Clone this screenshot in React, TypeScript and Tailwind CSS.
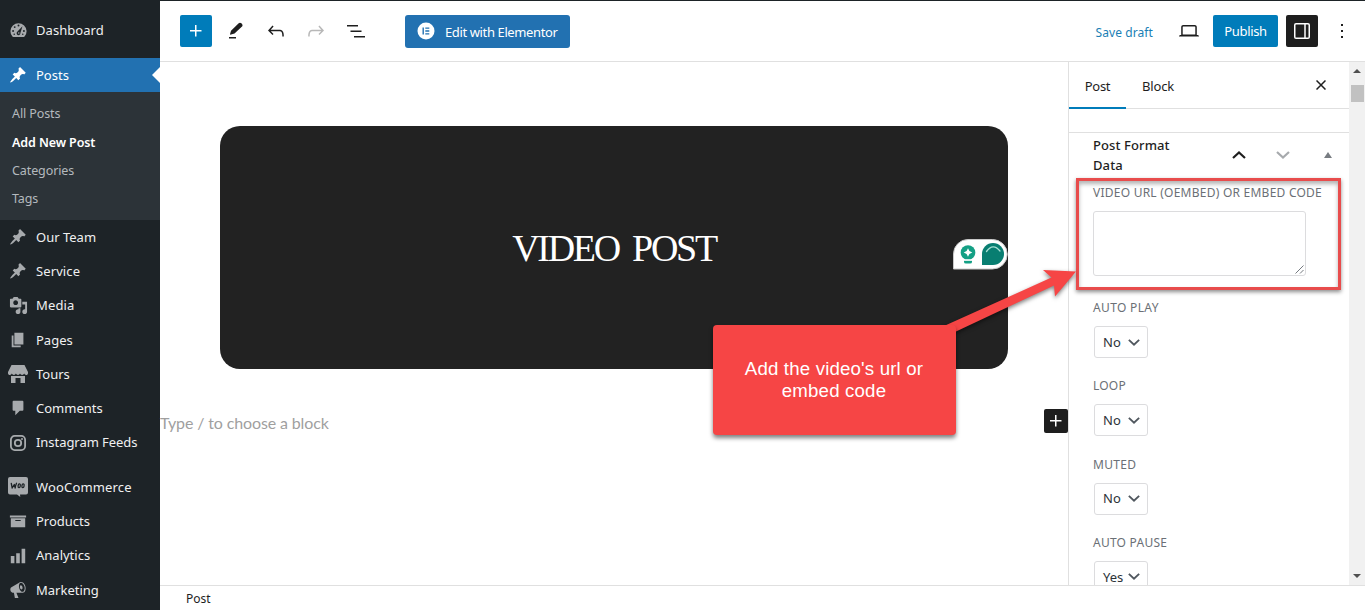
import type { ReactNode } from "react";

const ICONS = {
  pin: "M10.44 3.02l1.82-1.82 6.36 6.35-1.83 1.82c-1.05-.68-2.48-.57-3.41.36l-.75.75c-.92.93-1.04 2.35-.35 3.41l-1.83 1.82-2.41-2.41-2.8 2.79c-.42.42-3.38 2.71-3.8 2.29s1.86-3.39 2.28-3.81l2.79-2.79L4.1 9.36l1.83-1.82c1.05.69 2.48.57 3.4-.36l.75-.75c.93-.92 1.05-2.35.36-3.41z",
  media:
    "M13 11V4c0-.55-.45-1-1-1h-1.67L9 1H5L3.67 3H2c-.55 0-1 .45-1 1v7c0 .55.45 1 1 1h10c.55 0 1-.45 1-1zM7 4.5c1.38 0 2.5 1.12 2.5 2.5S8.38 9.5 7 9.5 4.5 8.38 4.5 7 5.62 4.5 7 4.5zM14 6h5v10.5c0 1.38-1.12 2.5-2.5 2.5S14 17.88 14 16.5s1.12-2.5 2.5-2.5c.17 0 .34.02.5.05V9h-3V6zm-4 8.05V13h2v3.5c0 1.38-1.12 2.5-2.5 2.5S7 17.88 7 16.5 8.12 14 9.5 14c.17 0 .34.02.5.05z",
  page: "M6 15V2h10v13H6zm-1 1h8v2H3V5h2v11z",
  comment: "M5 2h10c.6 0 1 .4 1 1v9c0 .6-.4 1-1 1h-3l-5 5v-5H5c-.6 0-1-.4-1-1V3c0-.6.4-1 1-1z",
  store:
    "M3.500 1h13L20 8v1.200c0 1-.8 1.800-1.800 1.800s-1.700-.7-2-1.400c-.4.8-1.200 1.400-2.100 1.400s-1.700-.6-2.100-1.400c-.4.8-1.100 1.400-2 1.400s-1.700-.6-2.100-1.400c-.4.8-1.100 1.400-2 1.400S4.200 10.400 3.800 9.600C3.500 10.400 2.800 11 1.900 11 .8 11 0 10.200 0 9.200V8zM3 12h14v7h-4.500v-5h-5v5H3z",
  archive: "M19 4v2H1V4h18zM2 7h16v10H2V7zm11 3V9H7v1h6z",
  chart: "M18 18V2h-4v16h4zm-6 0V7H8v11h4zm-6 0v-8H2v8h4z",
  megaphone:
    "M18.15 5.94c.46 1.62.38 3.22-.02 4.48-.42 1.28-1.26 2.18-2.3 2.48-.16.06-.26.06-.4.06-.06.02-.12.02-.18.02-.06.02-.14.02-.22.02h-6.8l2.22 5.5c.02.14-.06.26-.14.34-.08.1-.24.16-.34.16H6.95c-.1 0-.26-.06-.34-.16-.08-.08-.16-.2-.14-.34l-1-5.5H4.25l-.02-.02c-.5.06-1.08-.18-1.54-.62s-.88-1.08-1.06-1.88c-.24-.8-.2-1.56-.02-2.2.18-.62.58-1.08 1.06-1.3l.02-.02 9-5.4c.1-.06.18-.1.24-.16.06-.04.14-.08.24-.12.16-.08.28-.12.5-.18 1.04-.3 2.24.1 3.22.98s1.84 2.24 2.26 3.86zm-2.58 5.98h-.02c.4-.1.74-.34 1.04-.7.58-.7.86-1.76.86-3.04 0-.64-.1-1.3-.28-1.98-.34-1.36-1.02-2.5-1.78-3.24s-1.68-1.1-2.46-.88c-.82.22-1.4.96-1.7 2-.32 1.04-.28 2.36.06 3.72.38 1.36 1 2.5 1.8 3.24.78.74 1.62 1.1 2.48.88zm-2.54-7.08c.22-.04.42-.02.62.04.38.16.76.48 1.02 1s.42 1.2.42 1.78c0 .3-.04.56-.12.8-.18.48-.44.84-.86.94-.34.1-.8-.06-1.14-.4s-.64-.86-.78-1.5c-.18-.62-.12-1.24.02-1.72s.48-.84.82-.94z",
  undo: "M18.3 11.7c-.6-.6-1.4-.9-2.3-.9H6.7l2.9-3.3-1.1-1-4.5 5L8.5 16l1-1-2.7-2.7H16c.5 0 .9.2 1.3.5 1 1 1 3.4 1 4.5v.3h1.5v-.2c0-1.5 0-4.3-1.5-5.7z",
  plus: "M11 12.5V17.5H12.5V12.5H17.5V11H12.5V6H11V11H6V12.5H11Z",
  list: "M3 6h11v1.5H3V6Zm3.5 5.5h11V13h-11v-1.5ZM21 17H10v1.5h11V17Z",
  laptop:
    "M20.5 16h-.7V8c0-1.1-.9-2-2-2H6.2c-1.1 0-2 .9-2 2v8h-.7c-.8 0-1.5.7-1.5 1.5h20c0-.8-.7-1.5-1.5-1.5zM5.7 8c0-.3.2-.5.5-.5h11.6c.3 0 .5.2.5.5v7.6H5.7V8z",
};

function Dash({ d, className = "size-[18px]" }: { d: string; className?: string }) {
  return (
    <svg viewBox="0 0 20 20" className={className} fill="currentColor" fillRule="evenodd">
      <path d={d} />
    </svg>
  );
}

function Glyph({ d, className = "" }: { d: string; className?: string }) {
  return (
    <svg viewBox="0 0 24 24" className={`size-6 shrink-0 ${className}`} fill="currentColor" fillRule="evenodd">
      <path d={d} />
    </svg>
  );
}

function DashboardIcon() {
  return (
    <svg viewBox="0 0 20 20" className="size-[19px]">
      <path fill="currentColor" d="M3.600 16.400A8.500 8.500 0 1 1 16.400 16.400Q16 16.800 15.500 16.800H4.500Q4 16.800 3.600 16.400z" />
      <g fill="#1d2327">
        <circle cx="10" cy="4.700" r="1" />
        <circle cx="6" cy="6.400" r="1" />
        <circle cx="4.300" cy="10.500" r="1" />
        <circle cx="15.700" cy="10.500" r="1" />
        <circle cx="5.500" cy="14" r=".8" />
        <circle cx="14.500" cy="14" r=".8" />
        <path d="M14.200 5.400 12 12.700a2 2 0 1 1-3.300-1.300z" />
      </g>
      <circle cx="10.300" cy="12.700" r=".8" fill="currentColor" />
    </svg>
  );
}

function InstagramIcon() {
  return (
    <svg viewBox="0 0 18 18" className="size-[18px]" fill="none" stroke="currentColor" strokeWidth="1.800">
      <rect x="1.900" y="1.900" width="14.200" height="14.200" rx="3.800" />
      <circle cx="9" cy="9" r="3.200" />
      <circle cx="13" cy="5" r="1" fill="currentColor" stroke="none" />
    </svg>
  );
}

function WooIcon() {
  return (
    <svg viewBox="0 0 20 20" className="size-5" fill="none">
      <path fill="#a7aaad" d="M2 0h16a2 2 0 0 1 2 2v13.500a2 2 0 0 1-2 2h-6l.3 2.500-3.300-2.500H2a2 2 0 0 1-2-2V2A2 2 0 0 1 2 0z" />
      <g stroke="#1d2327" strokeWidth="1.300" strokeLinejoin="round" strokeLinecap="round">
        <path d="M3.300 6.500 4.200 11 6.300 7.500 7.200 11Q7.500 8.500 8.500 6.300" />
        <ellipse cx="11.200" cy="8.800" rx="1.100" ry="1.900" transform="rotate(10 11.200 8.800)" />
        <ellipse cx="15" cy="8.800" rx="1.100" ry="1.900" transform="rotate(10 15 8.800)" />
      </g>
    </svg>
  );
}

function MenuItem({ icon, label, spacing = "" }: { icon: ReactNode; label: string; spacing?: string }) {
  return (
    <a className="flex h-[34.25px] shrink-0 items-center text-[#f0f0f1]">
      <span className="flex w-9 justify-center text-[#a7aaad]">{icon}</span>
      <span className={`pt-[1.2px] text-[13px] whitespace-nowrap ${spacing}`}>{label}</span>
    </a>
  );
}

function Sidebar() {
  return (
    <nav className="flex h-full w-40 shrink-0 flex-col overflow-hidden bg-[#1d2327]">
      <div className="flex h-[58px] shrink-0 items-center pt-[2px]">
        <MenuItem icon={<DashboardIcon />} label="Dashboard" spacing="tracking-[0.05px]" />
      </div>
      <div className="flex h-[34px] shrink-0 items-center bg-[#2271b1] text-white">
        <span className="flex w-9 justify-center"><Dash d={ICONS.pin} /></span>
        <span className="flex-1 pt-[2px] text-[13px]">Posts</span>
        <svg viewBox="0 0 8 16" className="h-4 w-2" fill="#fff"><path d="M8 0v16L0 8z" /></svg>
      </div>
      <div className="flex h-32 shrink-0 flex-col bg-[#2c3338] pt-2 pl-3 text-[12.5px] tracking-[-0.1px] text-[#b4b9be]">
        <span className="flex h-[29px] items-center">All Posts</span>
        <span className="flex h-[28px] items-center font-semibold text-white">Add New Post</span>
        <span className="flex h-[28px] items-center">Categories</span>
        <span className="flex h-[28px] items-center">Tags</span>
      </div>
      <MenuItem icon={<Dash d={ICONS.pin} />} label="Our Team" />
      <MenuItem icon={<Dash d={ICONS.pin} />} label="Service" spacing="tracking-[0.1px]" />
      <MenuItem icon={<Dash d={ICONS.media} className="size-[19px]" />} label="Media" spacing="tracking-[0.15px]" />
      <MenuItem icon={<Dash d={ICONS.page} />} label="Pages" />
      <MenuItem icon={<Dash d={ICONS.store} className="size-5" />} label="Tours" />
      <MenuItem icon={<Dash d={ICONS.comment} />} label="Comments" />
      <MenuItem icon={<InstagramIcon />} label="Instagram Feeds" spacing="tracking-[-0.05px]" />
      <div className="h-[10.25px] shrink-0" />
      <MenuItem icon={<WooIcon />} label="WooCommerce" spacing="tracking-[0.15px]" />
      <MenuItem icon={<Dash d={ICONS.archive} />} label="Products" />
      <MenuItem icon={<Dash d={ICONS.chart} />} label="Analytics" />
      <MenuItem icon={<Dash d={ICONS.megaphone} />} label="Marketing" />
    </nav>
  );
}

function TopBar() {
  return (
    <header className="flex h-[62px] shrink-0 items-center border-t border-b border-t-[#1d2327] border-b-[#e0e0e0] pr-[11px] pl-5 text-[#1e1e1e]">
      <button className="flex size-8 items-center justify-center rounded-[2px] bg-[#007cba] text-white">
        <Glyph d={ICONS.plus} />
      </button>
      <svg viewBox="0 0 16 18" className="ml-4 h-[18px] w-4" fill="#1e1e1e">
        <path d="M2 12.2 3 8.7 10.700 1.300Q12 .3 13.700 1.500 15.200 3 14.300 4.300L6.500 11.600 2.300 12.800zM1 14.900h7v1.500H1z" />
      </svg>
      <Glyph d={ICONS.undo} className="ml-5" />
      <Glyph d={ICONS.undo} className="ml-4 -scale-x-100 text-[#b8b8b8]" />
      <Glyph d={ICONS.list} className="ml-4" />
      <button className="ml-[37px] flex h-[33px] w-[165px] items-center rounded-[3px] bg-[#2271b1] pl-3 text-white">
        <svg viewBox="0 0 18 18" className="size-[18px]">
          <circle cx="9" cy="9" r="8.5" fill="#fff" />
          <path fill="#2271b1" d="M5.500 5.500h1.400v7H5.500zM8.300 5.500h4v1.300h-4zM8.300 8.350h4v1.300h-4zM8.300 11.200h4v1.300h-4z" />
        </svg>
        <span className="ml-[10px] pt-[3px] text-[13px] tracking-[-0.38px] whitespace-nowrap">Edit with Elementor</span>
      </button>
      <div className="flex-1" />
      <span className="pt-[3px] text-[12px] tracking-[0.08px] text-[#1a7fb5]">Save draft</span>
      <Glyph d={ICONS.laptop} className="ml-6" />
      <button className="ml-3 flex h-8 w-[65px] items-center justify-center rounded-[2px] bg-[#007cba] pt-[2px] text-[13px] tracking-[-0.35px] text-white">Publish</button>
      <button className="ml-2 flex size-8 items-center justify-center rounded-[2px] bg-[#1e1e1e]">
        <svg viewBox="0 0 16 16" className="size-4" fill="none" stroke="#fff" strokeWidth="1.500">
          <rect x=".75" y=".75" width="14.500" height="14.500" rx="1.300" />
          <path d="M11 1v14" />
        </svg>
      </button>
      <svg viewBox="0 0 24 24" className="ml-3 size-6" fill="#1e1e1e">
        <path d="M11 5h2v2h-2zM11 11h2v2h-2zM11 17h2v2h-2z" />
      </svg>
    </header>
  );
}

function Canvas() {
  return (
    <main className="flex flex-1 flex-col pt-16">
      <section className="relative ml-[60px] flex h-[243px] w-[788px] items-center justify-center rounded-[20px] bg-[#222]">
        <h1 className="font-['Liberation_Serif',serif] text-[38px] leading-none tracking-[-2.3px] text-white [word-spacing:6px]">VIDEO POST</h1>
        <svg viewBox="0 0 56 32" className="absolute top-[112px] right-0 h-8 w-14">
          <path fill="#fff" stroke="#c9c9c9" strokeWidth="1" d="M1.500 31V16A14.500 14.500 0 0 1 16 1.500H40.500A14.750 14.750 0 0 1 40.500 31z" />
          <circle cx="16" cy="14.500" r="7.300" fill="#14a085" />
          <path fill="#14a085" d="M12 18h8l-1 4h-6zM12 22.700h8v1.200q0 1.700-2 1.700h-4q-2 0-2-1.700z" />
          <path d="M12 21.800h8" stroke="#fff" strokeWidth="1.200" />
          <path fill="#fff" d="m16 10.200 1.400 2.900 2.900 1.400-2.900 1.400-1.400 2.900-1.400-2.900-2.900-1.400 2.900-1.400z" />
          <path fill="#087e71" d="M30 27V16a11 11 0 1 1 11 11z" />
          <path d="M34.500 13.500Q41 4.500 48 13" fill="none" stroke="#a5e0d4" strokeWidth="1.300" strokeLinecap="round" />
        </svg>
      </section>
      <div className="mt-10 flex h-6 items-center justify-between">
        <span className="pt-[3px] font-[Lato,sans-serif] text-[16px] tracking-[-0.13px] text-[#9f9f9f]">Type / to choose a block</span>
        <button className="flex size-6 items-center justify-center rounded-[2px] bg-[#1e1e1e] text-white">
          <Glyph d={ICONS.plus} />
        </button>
      </div>
    </main>
  );
}

function Chevron({ up = false, className = "" }: { up?: boolean; className?: string }) {
  return (
    <svg viewBox="0 0 14 8" className={className} fill="none" stroke="currentColor" strokeWidth="2.200">
      <path d={up ? "M1 7l6-5.500L13 7" : "M1 1l6 5.500L13 1"} />
    </svg>
  );
}

function SelectField({ label, value, spacing }: { label: string; value: string; spacing: string }) {
  return (
    <div className="flex h-[78.3px] shrink-0 flex-col">
      <span className={`flex h-5 items-center text-[12px] text-[#6b7076] ${spacing}`}>{label}</span>
      <div className="mt-2 ml-px flex h-8 w-[54px] shrink-0 items-center justify-between rounded-[3px] border border-[#dcdcde] pr-[7px] pl-2 text-[13px] text-[#2c3338]">
        <span className="pt-px">{value}</span>
        <Chevron className="h-[7px] w-3 text-[#50575e]" />
      </div>
    </div>
  );
}

function Inspector() {
  return (
    <aside className="flex w-[281px] shrink-0 flex-col overflow-hidden border-l border-[#e0e0e0]">
      <div className="flex h-[47px] shrink-0 items-stretch border-b border-[#e0e0e0] text-[13px] text-[#1e1e1e]">
        <span className="-mb-px flex w-[57px] items-center justify-center border-b-2 border-[#007cba] pt-[5px] tracking-[-0.3px]">Post</span>
        <span className="ml-4 flex items-center pt-[3px] tracking-[-0.15px]">Block</span>
        <svg viewBox="0 0 10 10" className="mt-[18px] mr-[23px] ml-auto size-[10px]" stroke="#1e1e1e" strokeWidth="1.500">
          <path d="M.5.5l9 9M9.5.5l-9 9" />
        </svg>
      </div>
      <div className="h-6 shrink-0 border-b border-[#e0e0e0]" />
      <div className="flex h-[45px] shrink-0 items-center pr-[17px] pb-[2px] pl-6 text-[#1e1e1e]">
        <h2 className="w-[100px] text-[13px] leading-5 font-medium tracking-[0.1px]">Post Format Data</h2>
        <Chevron up className="ml-[39px] h-2 w-[14px]" />
        <Chevron className="ml-[30px] h-2 w-[14px] text-[#a7aaad]" />
        <svg viewBox="0 0 8 6" className="ml-auto h-[6px] w-2" fill="#787c82"><path d="M4 0l4 6H0z" /></svg>
      </div>
      <div className="flex h-[120px] shrink-0 flex-col pt-[5px] pl-6">
        <span className="flex h-5 items-center text-[12px] tracking-[0.24px] whitespace-nowrap text-[#6b7076]">VIDEO URL (OEMBED) OR EMBED CODE</span>
        <div className="mt-2 flex h-[65px] w-[213px] shrink-0 items-end justify-end rounded-[3px] border border-[#dcdcde] p-px">
          <svg viewBox="0 0 9 9" className="size-[9px]" stroke="#50575e" strokeWidth=".8">
            <path d="M.5 8.500l8-8M5 8.500l3.500-3.500" />
          </svg>
        </div>
      </div>
      <div className="flex flex-col pl-6">
        <SelectField label="AUTO PLAY" value="No" spacing="tracking-[0.35px]" />
        <SelectField label="LOOP" value="No" spacing="tracking-[0.2px]" />
        <SelectField label="MUTED" value="No" spacing="tracking-[0.3px]" />
        <SelectField label="AUTO PAUSE" value="Yes" spacing="tracking-[0.25px]" />
      </div>
    </aside>
  );
}

function Scrollbar() {
  return (
    <div className="flex w-4 shrink-0 flex-col items-center bg-[#f1f1f1]">
      <svg viewBox="0 0 8 4" className="mt-[7px] h-1 w-2" fill="#505050"><path d="M4 0l4 4H0z" /></svg>
      <div className="mt-3 h-[17px] w-[13px] bg-[#c1c1c1]" />
      <svg viewBox="0 0 8 4" className="mt-auto mb-[7px] h-1 w-2" fill="#505050"><path d="M0 0h8L4 4z" /></svg>
    </div>
  );
}

function Annotations() {
  return (
    <>
      <div className="absolute top-[178px] left-[1076px] h-[112px] w-[265px] border-[3px] border-[#e84c4c] shadow-[0_2px_4px_rgba(0,0,0,0.45),inset_0_3px_4px_rgba(0,0,0,0.3)]" />
      <svg viewBox="0 0 150 80" className="absolute top-[260px] left-[930px] h-20 w-[150px] overflow-visible drop-shadow-[0_2px_2px_rgba(0,0,0,0.5)]">
        <path fill="#f64545" d="M14 66 121.500 17.500 113 10 146 11.500 125 36.500 124 25.500 26 71.500z" />
      </svg>
      <div className="absolute top-[325px] left-[713px] flex h-[110px] w-[243px] items-center justify-center rounded-[4px] bg-[#f64545] pr-[1px] text-center font-['Liberation_Sans',sans-serif] text-[18.67px] leading-[22px] tracking-[0.17px] text-white shadow-[0_3px_4px_rgba(0,0,0,0.5)]">
        <p>Add the video's url or<br />embed code</p>
      </div>
    </>
  );
}

export default function App() {
  return (
    <div className="relative flex h-[610px] w-[1365px] overflow-hidden bg-white font-['Noto_Sans',sans-serif]">
      <Sidebar />
      <div className="flex flex-1 flex-col">
        <TopBar />
        <div className="flex h-[523px] shrink-0">
          <Canvas />
          <Inspector />
          <Scrollbar />
        </div>
        <footer className="flex flex-1 items-center border-t border-[#e0e0e0] pt-[2px] pl-[26px] text-[12px] text-[#1e1e1e]">Post</footer>
      </div>
      <Annotations />
    </div>
  );
}
